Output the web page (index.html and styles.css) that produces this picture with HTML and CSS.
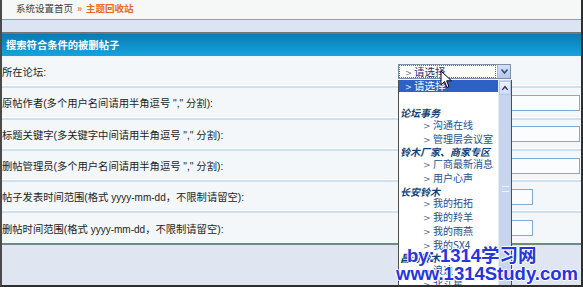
FILE: index.html
```html
<!DOCTYPE html>
<html>
<head>
<meta charset="utf-8">
<title>主题回收站</title>
<link rel="stylesheet" href="styles.css">
</head>
<body>
<div class="frame">
  <div class="crumb"><span class="crumb-home">系统设置首页</span><span class="crumb-sep">»</span><span class="crumb-cur">主题回收站</span></div>
  <div class="band"></div>
  <div class="head">搜索符合条件的被删帖子</div>
  <div class="rows">
    <div class="row">
      <div class="label">所在论坛:</div>
      <div class="ctrl">
        <div class="select"><span class="sel-text"><span class="gt">&gt;</span> 请选择</span><span class="sel-btn"><svg width="11" height="11" viewBox="0 0 11 11"><path d="M2.5 3.5 L5.5 7 L8.5 3.5" fill="none" stroke="#3a4e7a" stroke-width="1.6"/></svg></span></div>
      </div>
    </div>
    <div class="row">
      <div class="label">原帖作者(多个用户名间请用半角逗号 "," 分割):</div>
      <div class="ctrl"><div class="input wide"></div></div>
    </div>
    <div class="row">
      <div class="label">标题关键字(多关键字中间请用半角逗号 "," 分割):</div>
      <div class="ctrl"><div class="input wide"></div></div>
    </div>
    <div class="row">
      <div class="label">删帖管理员(多个用户名间请用半角逗号 "," 分割):</div>
      <div class="ctrl"><div class="input wide"></div></div>
    </div>
    <div class="row">
      <div class="label">帖子发表时间范围(格式 <span class="lat">yyyy-mm-dd</span>，不限制请留空):</div>
      <div class="ctrl"><div class="input short"></div></div>
    </div>
    <div class="row last">
      <div class="label">删帖时间范围(格式 <span class="lat">yyyy-mm-dd</span>，不限制请留空):</div>
      <div class="ctrl"><div class="input short"></div></div>
    </div>
  </div>
  <div class="foot"></div>

  <div class="dropdown">
    <div class="list">
      <div class="opt active"><span class="gt">&gt;</span> 请选择</div>
      <div class="opt blank"></div>
      <div class="opt group">论坛事务</div>
      <div class="opt child"><span class="arr">&gt;</span>沟通在线</div>
      <div class="opt child"><span class="arr">&gt;</span>管理层会议室</div>
      <div class="opt group">铃木厂家、商家专区</div>
      <div class="opt child"><span class="arr">&gt;</span>厂商最新消息</div>
      <div class="opt child"><span class="arr">&gt;</span>用户心声</div>
      <div class="opt group">长安铃木</div>
      <div class="opt child"><span class="arr">&gt;</span>我的拓拓</div>
      <div class="opt child"><span class="arr">&gt;</span>我的羚羊</div>
      <div class="opt child"><span class="arr">&gt;</span>我的雨燕</div>
      <div class="opt child"><span class="arr">&gt;</span>我的SX4</div>
      <div class="opt group">昌河铃木</div>
      <div class="opt child"><span class="arr">&gt;</span>浪迪</div>
      <div class="opt child"><span class="arr">&gt;</span>北斗星</div>
      <div class="opt child"><span class="arr">&gt;</span>浪迪</div>
    </div>
    <div class="scroll">
      <div class="sc-up"><svg width="11" height="11" viewBox="0 0 11 11"><path d="M2.5 7 L5.5 3.5 L8.5 7" fill="none" stroke="#2d3f6e" stroke-width="1.6"/></svg></div>
      <div class="sc-track"><div class="sc-grip"></div></div>
    </div>
  </div>

  <svg class="cursor" width="13" height="20" viewBox="0 0 13 20"><path d="M1 1 L1 15 L4.5 11.5 L7 17.5 L9 16.6 L6.6 10.8 L11.5 10.8 Z" fill="#fff" stroke="#000" stroke-width="1"/></svg>

  <div class="mark">
    <div class="mark1">by: 1314学习网</div>
    <div class="mark2">www.1314Study.com</div>
  </div>
</div>
</body>
</html>
```
FILE: styles.css
```css
* { box-sizing: border-box; }
html, body { margin: 0; padding: 0; background: #3a3a3a; }
.frame {
  position: relative;
  width: 583px;
  height: 287px;
  overflow: hidden;
  background: #f5f7f8;
  border-left: 2px solid #4a4a4a;
  border-right: 2px solid #2f2f2f;
  border-bottom: 2px solid #2f2f2f;
  display: flex;
  flex-direction: column;
  font-family: "Noto Sans CJK SC", "Liberation Sans", sans-serif;
}
.crumb {
  height: 20px;
  padding-left: 14px;
  font-size: 9.5px;
  line-height: 16px;
  border-bottom: 1px solid #55b2e0;
  background: #f6f7f7;
  flex: none;
}
.crumb-home { color: #404040; }
.crumb-sep { color: #f07a20; margin: 0 4px; font-weight: bold; }
.crumb-cur { color: #f0661a; font-weight: bold; }
.band {
  height: 14px;
  background: #dde4f1;
  border-bottom: 2px solid #747474;
  flex: none;
}
.head {
  height: 23px;
  flex: none;
  background: linear-gradient(#0b7cb2, #0f8fc8 50%, #15a4de);
  color: #fff;
  font-weight: bold;
  font-size: 10.3px;
  line-height: 21px;
  padding-left: 4px;
  border-bottom: 1px solid #f2f5f7;
}
.rows { flex: none; }
.row {
  height: 31.3px;
  display: flex;
  align-items: center;
  background: #f4f7f9;
  border-bottom: 2px solid #cfe0ef;
  box-shadow: inset 0 -1px 0 #ffffff;
}
.row.last { border-bottom: 2px solid #6d8a84; box-shadow: none; }
.label {
  flex: 1;
  font-family: "Liberation Sans", "Noto Sans CJK SC", sans-serif;
  font-size: 10.3px;
  color: #1c1c1c;
}
.lat { font-size: 10px; }
.ctrl { width: 183px; flex: none; }
.input {
  height: 16px;
  background: #fbfcfd;
  border: 1px solid #82a8d6;
}
.input.wide { width: 182px; }
.input.short { width: 135px; }
.select {
  width: 113px;
  height: 15px;
  margin-top: -1px;
  display: flex;
  border: 1px solid #7f8fa8;
  background: #fff;
}
.sel-text {
  flex: 1;
  font-size: 10.5px;
  line-height: 12px;
  color: #1b2f6a;
  padding-left: 5px;
  border: 1px dotted #666;
  margin: 0 1px 0 0;
}
.gt { font-family: "DejaVu Sans", sans-serif; font-size: 8px; color: #6b7fa6; }
.sel-btn {
  width: 13px;
  flex: none;
  background: linear-gradient(#d4e0f8, #b4c8ee);
  border-left: 1px solid #a9b9d8;
  display: flex;
  align-items: center;
  justify-content: center;
}
.foot { flex: 1; background: #dfe6f2; }

.dropdown {
  position: absolute;
  left: 396px;
  top: 80px;
  width: 114px;
  height: 210px;
  background: #fff;
  border: 1px solid #4d4d4d;
  border-top: none;
  display: flex;
}
.list { flex: 1; font-size: 10px; }
.opt { line-height: 11.77px; white-space: nowrap; }
.opt.active {
  height: 12px;
  line-height: 12px;
  background: #2e61c6;
  color: #fff;
  padding-left: 6px;
  font-size: 10.5px;
}
.opt.active .gt { color: #dfe7ff; }
.opt.blank { height: 15px; }
.opt.group {
  padding-left: 1px;
  font-weight: bold;
  font-style: italic;
  color: #143f78;
}
.opt.child { padding-left: 24px; color: #22508e; }
.arr {
  display: inline-block;
  width: 10px;
  font-family: "DejaVu Sans", sans-serif;
  font-size: 9px;
  color: #5a6f99;
}
.scroll {
  width: 13px;
  flex: none;
  display: flex;
  flex-direction: column;
  background: #c5d5ee;
  border-left: 1px solid #e4ecf8;
}
.sc-up {
  height: 14px;
  margin: 1px 0;
  background: linear-gradient(#eef3fc, #cddbf2);
  border: 1px solid #b5c6e4;
  display: flex;
  align-items: center;
  justify-content: center;
}
.sc-track { flex: 1; position: relative; background: #c7d6ee; }
.sc-grip {
  position: absolute;
  left: 3px;
  top: 90px;
  width: 7px;
  height: 6px;
  border-top: 1px solid #eef3fb;
  border-bottom: 1px solid #eef3fb;
}
.cursor { position: absolute; left: 438px; top: 70px; }
.mark {
  position: absolute;
  left: 394px;
  top: 247px;
  font-family: "Liberation Sans", "Noto Sans CJK SC", sans-serif;
  font-weight: bold;
  font-size: 18.5px;
  color: #2536dc;
  text-shadow: 1px 0 0 #fff, -1px 0 0 #fff, 0 1px 0 #fff, 0 -1px 0 #fff, 1px 1px 0 #e8ecff;
  line-height: 18px;
}
.mark1 { padding-left: 11px; }
.mark2 { margin-top: 0; }
```
